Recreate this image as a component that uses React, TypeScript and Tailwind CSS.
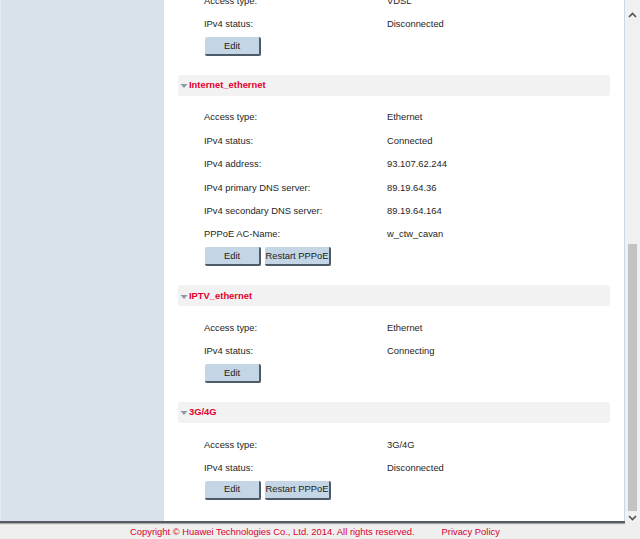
const font = { fontFamily: '"Liberation Sans", Arial, sans-serif' };

type Row = [string, string];

interface Section {
  name: string;
  rows: Row[];
  restart?: boolean;
}

const sections: Section[] = [
  {
    name: 'Internet_ethernet',
    rows: [
      ['Access type:', 'Ethernet'],
      ['IPv4 status:', 'Connected'],
      ['IPv4 address:', '93.107.62.244'],
      ['IPv4 primary DNS server:', '89.19.64.36'],
      ['IPv4 secondary DNS server:', '89.19.64.164'],
      ['PPPoE AC-Name:', 'w_ctw_cavan'],
    ],
    restart: true,
  },
  {
    name: 'IPTV_ethernet',
    rows: [
      ['Access type:', 'Ethernet'],
      ['IPv4 status:', 'Connecting'],
    ],
  },
  {
    name: '3G/4G',
    rows: [
      ['Access type:', '3G/4G'],
      ['IPv4 status:', 'Disconnected'],
    ],
    restart: true,
  },
];

function InfoRow({ label, value }: { label: string; value: string }) {
  return (
    <div className="flex items-center h-[23.4px] text-[9.4px] text-[#1e1e1e]">
      <span className="w-[223px] pl-[40px]">{label}</span>
      <span>{value}</span>
    </div>
  );
}

function Btn({ label, w }: { label: string; w: string }) {
  return (
    <button
      className={`${w} h-[19px] bg-[#c4d6e5] border-r-2 border-b-2 border-[#4d5b69] rounded-[2px] text-[9.4px] text-[#222] leading-none flex items-center justify-center whitespace-nowrap overflow-hidden`}
    >
      {label}
    </button>
  );
}

function Buttons({ restart }: { restart?: boolean }) {
  return (
    <div className="flex gap-[4px] pl-[41px] mt-[1px]">
      <Btn label="Edit" w="w-[56px]" />
      {restart && <Btn label="Restart PPPoE" w="w-[66px]" />}
    </div>
  );
}

function Header({ name }: { name: string }) {
  return (
    <div className="mx-[14px] h-[21px] bg-[#f2f2f2] rounded-[3px] flex items-center">
      <svg width="8" height="6" viewBox="0 0 8 6" className="ml-[2px] mr-[1px] mt-[2px]">
        <path d="M0.5 1 L7.5 1 L4 5 Z" fill="#8a98a8" />
      </svg>
      <span className="text-[9.4px] font-bold text-[#e3002d]">{name}</span>
    </div>
  );
}

export default function App() {
  return (
    <div style={font} className="w-[640px] h-[539px] flex flex-col bg-[#efefef] overflow-hidden">
      <div className="h-[525px] flex">
        <div className="w-[625px] flex border-b-2 border-[#555c64] shadow-[0_1px_1px_rgba(0,0,0,0.3)]">
          <div className="w-[164px] bg-[#d9e1eb] border-l border-[#e6ecf3]" />
          <div className="flex-1 bg-white overflow-hidden border-r border-[#cbd8e4]">
            <div className="-mt-[11px] mb-[-1px]">
              <InfoRow label="Access type:" value="VDSL" />
              <InfoRow label="IPv4 status:" value="Disconnected" />
              <Buttons />
            </div>
            {sections.map((s, i) => (
              <div key={s.name} className={i === 0 ? 'mt-[20px]' : 'mt-[19px]'}>
                <Header name={s.name} />
                <div className="mt-[10px]">
                  {s.rows.map(([l, v]) => (
                    <InfoRow key={l} label={l} value={v} />
                  ))}
                </div>
                <Buttons restart={s.restart} />
              </div>
            ))}
          </div>
        </div>
        <div className="w-[15px] bg-[#f0f0f0] flex flex-col items-center">
          <svg width="9" height="6" viewBox="0 0 9 6" className="mt-[12px]">
            <path d="M1 5 L4.5 1.5 L8 5" fill="none" stroke="#505050" strokeWidth="1.6" />
          </svg>
          <div className="flex-1" />
          <div className="w-[9px] h-[267px] bg-[#c2c2c2] mb-[4px]" />
          <svg width="9" height="6" viewBox="0 0 9 6" className="mb-[2px]">
            <path d="M1 1 L4.5 4.5 L8 1" fill="none" stroke="#505050" strokeWidth="1.6" />
          </svg>
        </div>
      </div>
      <div className="flex-1 flex items-center text-[9.4px] text-[#d6002f] pl-[130px] pt-[2px]">
        <span>Copyright © Huawei Technologies Co., Ltd. 2014. All rights reserved.</span>
        <span className="ml-[27px]">Privacy Policy</span>
      </div>
    </div>
  );
}
